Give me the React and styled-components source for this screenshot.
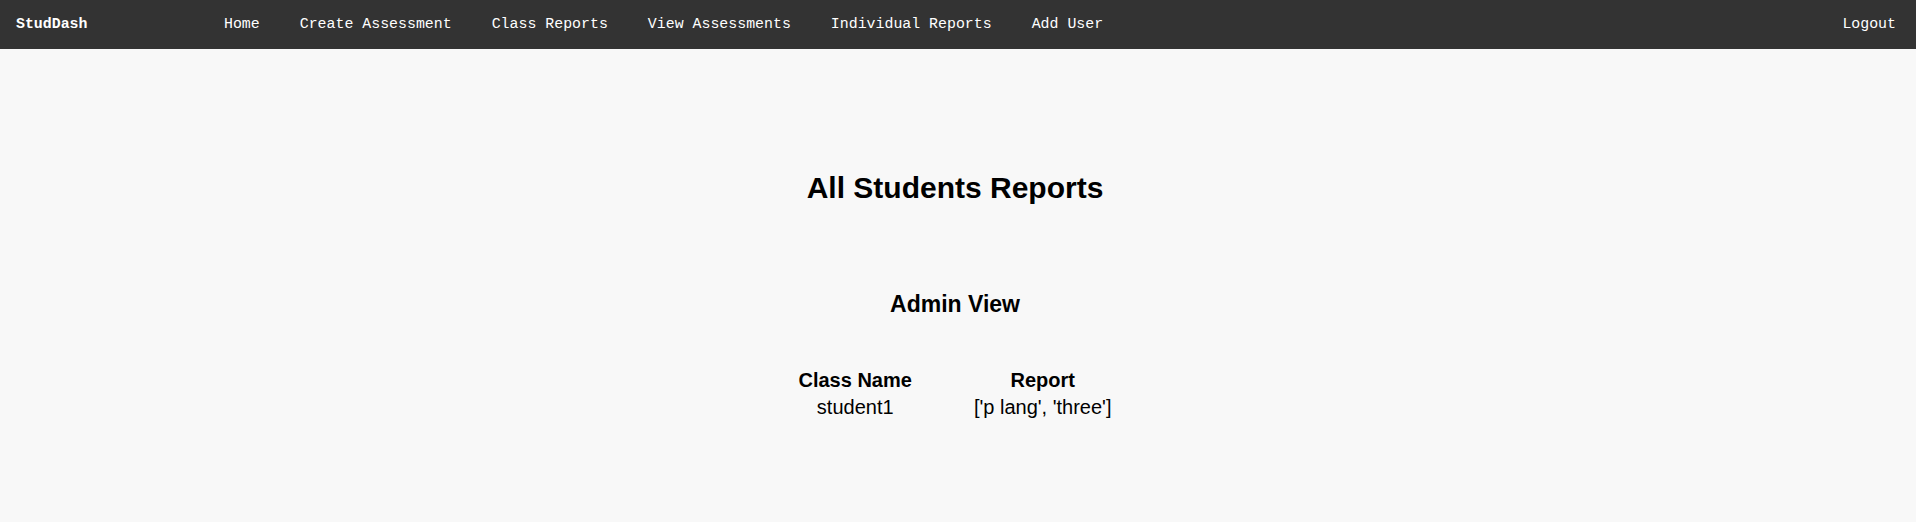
import styled, { createGlobalStyle } from "styled-components";

const GlobalStyle = createGlobalStyle`
  html, body {
    margin: 0;
    padding: 0;
    background-color: #f8f8f8;
  }
  body {
    font-family: "Liberation Sans", Arial, sans-serif;
    color: #000;
  }
`;

const NavBar = styled.nav`
  display: flex;
  align-items: center;
  height: 49px;
  background-color: #333333;
  padding: 0 20px 2px 16px;
  box-sizing: border-box;
  font-family: "Liberation Mono", "DejaVu Sans Mono", monospace;
  font-size: 14.9px;
  color: #fff;
`;

const Brand = styled.a`
  font-weight: bold;
  width: 188px;
  color: #fff;
  text-decoration: none;
`;

const NavLinks = styled.div`
  display: flex;
  flex-grow: 1;
`;

const NavLink = styled.a`
  padding: 0 ${(props) => (props.edge ? 0 : "20px")};
  color: #fff;
  text-decoration: none;
  white-space: pre;
`;

const Main = styled.main`
  display: flex;
  flex-direction: column;
  align-items: center;
  padding: 122px 6px 0 0;
`;

const Title = styled.h1`
  margin: 0;
  font-size: 30px;
  font-weight: bold;
  line-height: 34px;
`;

const SubTitle = styled.h2`
  margin: 86px 0 0;
  font-size: 23px;
  font-weight: bold;
  line-height: 27px;
`;

const ReportTable = styled.table`
  margin-top: 48px;
  font-size: 20px;
  border-spacing: 2px;
`;

const Cell = styled.td`
  padding: 1px 30px;
  text-align: center;
  line-height: 23px;
  font-weight: ${(props) => (props.head ? "bold" : "normal")};
`;

const links = [
  "Home",
  "Create Assessment",
  "Class Reports",
  "View Assessments",
  "Individual Reports",
  "Add User",
];

export default function App() {
  return (
    <>
      <GlobalStyle />
      <NavBar>
        <Brand>StudDash</Brand>
        <NavLinks>
          {links.map((l) => (
            <NavLink key={l}>{l}</NavLink>
          ))}
        </NavLinks>
        <NavLink edge>Logout</NavLink>
      </NavBar>
      <Main>
        <Title>All Students Reports</Title>
        <SubTitle>Admin View</SubTitle>
        <ReportTable>
          <tbody>
            <tr>
              <Cell head>Class Name</Cell>
              <Cell head>Report</Cell>
            </tr>
            <tr>
              <Cell>student1</Cell>
              <Cell>['p lang', 'three']</Cell>
            </tr>
          </tbody>
        </ReportTable>
      </Main>
    </>
  );
}
